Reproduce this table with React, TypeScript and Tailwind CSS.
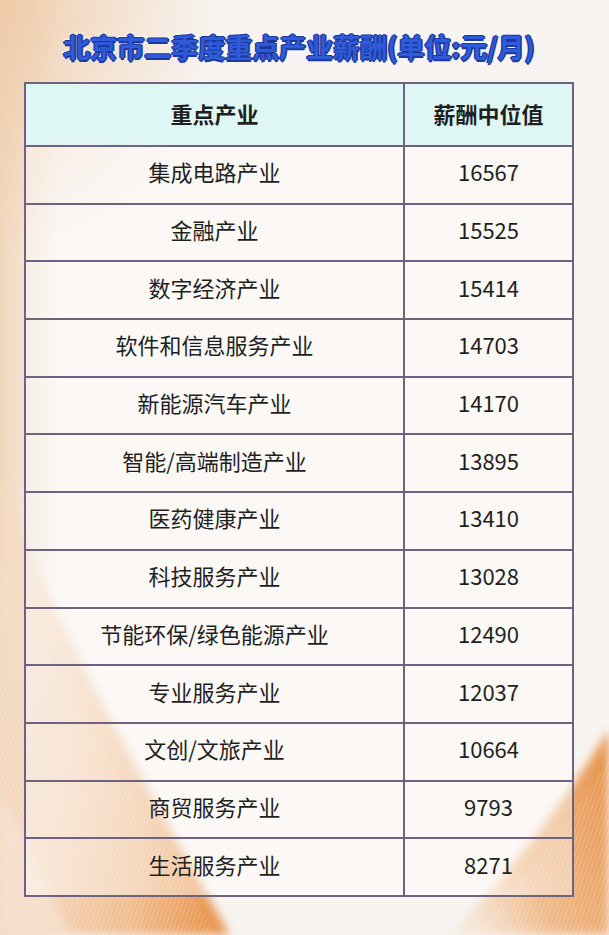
import React from 'react';

const rows = [
  { name: '集成电路产业', value: '16567' },
  { name: '金融产业', value: '15525' },
  { name: '数字经济产业', value: '15414' },
  { name: '软件和信息服务产业', value: '14703' },
  { name: '新能源汽车产业', value: '14170' },
  { name: '智能/高端制造产业', value: '13895' },
  { name: '医药健康产业', value: '13410' },
  { name: '科技服务产业', value: '13028' },
  { name: '节能环保/绿色能源产业', value: '12490' },
  { name: '专业服务产业', value: '12037' },
  { name: '文创/文旅产业', value: '10664' },
  { name: '商贸服务产业', value: '9793' },
  { name: '生活服务产业', value: '8271' },
];

const Backdrop = () => (
  <svg className="absolute inset-0" width="609" height="935" viewBox="0 0 609 935">
    <defs>
      <linearGradient id="leftEdge" x1="0" y1="0" x2="1" y2="0">
        <stop offset="0" stopColor="#f1d0b0" stopOpacity="0.8" />
        <stop offset="1" stopColor="#f1d0b0" stopOpacity="0" />
      </linearGradient>
      <radialGradient id="corner" cx="0" cy="0" r="1">
        <stop offset="0" stopColor="#efcaa6" stopOpacity="0.9" />
        <stop offset="1" stopColor="#efcaa6" stopOpacity="0" />
      </radialGradient>
      <linearGradient id="leftBand" x1="0" y1="0.3" x2="1" y2="0.6">
        <stop offset="0" stopColor="#f4dcc6" stopOpacity="0.6" />
        <stop offset="0.7" stopColor="#efb785" stopOpacity="0.9" />
        <stop offset="1" stopColor="#e99a55" stopOpacity="1" />
      </linearGradient>
      <linearGradient id="rightBand" x1="0" y1="0.8" x2="1" y2="0.2">
        <stop offset="0" stopColor="#f0c097" stopOpacity="0.2" />
        <stop offset="0.4" stopColor="#eeb07a" stopOpacity="0.85" />
        <stop offset="1" stopColor="#e7964f" stopOpacity="1" />
      </linearGradient>
      <pattern id="stripes" width="4" height="4" patternUnits="userSpaceOnUse" patternTransform="rotate(20)">
        <line x1="0" y1="0" x2="0" y2="4" stroke="#ffffff" strokeOpacity="0.35" strokeWidth="1" />
      </pattern>
      <filter id="soft">
        <feGaussianBlur stdDeviation="5" />
      </filter>
    </defs>
    <rect width="609" height="935" fill="#f8f4f1" />
    <rect x="0" y="0" width="60" height="935" fill="url(#leftEdge)" />
    <rect x="0" y="0" width="220" height="260" fill="url(#corner)" />
    <path d="M0,480 C50,610 130,760 230,935 L0,935 Z" fill="url(#leftBand)" filter="url(#soft)" />
    <path d="M0,560 C60,690 150,820 215,935 L0,935 Z" fill="url(#stripes)" />
    <path d="M0,790 C30,845 50,890 70,935 L0,935 Z" fill="#f6e6d8" fillOpacity="0.6" filter="url(#soft)" />
    <path d="M609,730 C560,810 505,875 450,935 L609,935 Z" fill="url(#rightBand)" filter="url(#soft)" />
    <path d="M609,760 C565,830 515,890 470,935 L609,935 Z" fill="url(#stripes)" />
  </svg>
);

const App = () => {
  return (
    <div
      className="relative w-[609px] h-[935px] overflow-hidden"
      style={{ fontFamily: '"Noto Sans CJK SC", "Noto Sans", sans-serif' }}
    >
      <Backdrop />

      <div className="relative ml-[25px] w-[548px] flex flex-col items-center">
        {/* Title */}
        <h1 className="mt-[33px] mb-[22px] text-[27px] leading-[27px] font-bold text-[#2f5ad8] [paint-order:stroke_fill] [-webkit-text-stroke:3.5px_#ffffff] [text-shadow:0_0_1.5px_#1d3a9e,1.5px_0_0_#1d3a9e,-1.5px_0_0_#1d3a9e,0_1.5px_0_#1d3a9e,0_-1.5px_0_#1d3a9e]">
          北京市二季度重点产业薪酬(单位:元/月)
        </h1>

        {/* Table */}
        <table className="w-[548px] table-fixed border-collapse border-2 border-[#6d6380] text-[#1f1f1f]">
          <colgroup>
            <col className="w-[379px]" />
            <col className="w-[169px]" />
          </colgroup>
          <thead>
            <tr className="h-[63px] bg-[#dff7f4]">
              <th className="border-2 border-[#6d6380] pb-[3px] text-[22px] font-bold">重点产业</th>
              <th className="border-2 border-[#6d6380] pb-[3px] text-[22px] font-bold">薪酬中位值</th>
            </tr>
          </thead>
          <tbody>
            {rows.map((row) => (
              <tr key={row.name} className="h-[57.7px] bg-white/40">
                <td className="border-2 border-[#6d6380] pb-[6px] text-center text-[22px]">{row.name}</td>
                <td className="border-2 border-[#6d6380] pb-[6px] text-center text-[22px]">{row.value}</td>
              </tr>
            ))}
          </tbody>
        </table>
      </div>
    </div>
  );
};

export default App;
